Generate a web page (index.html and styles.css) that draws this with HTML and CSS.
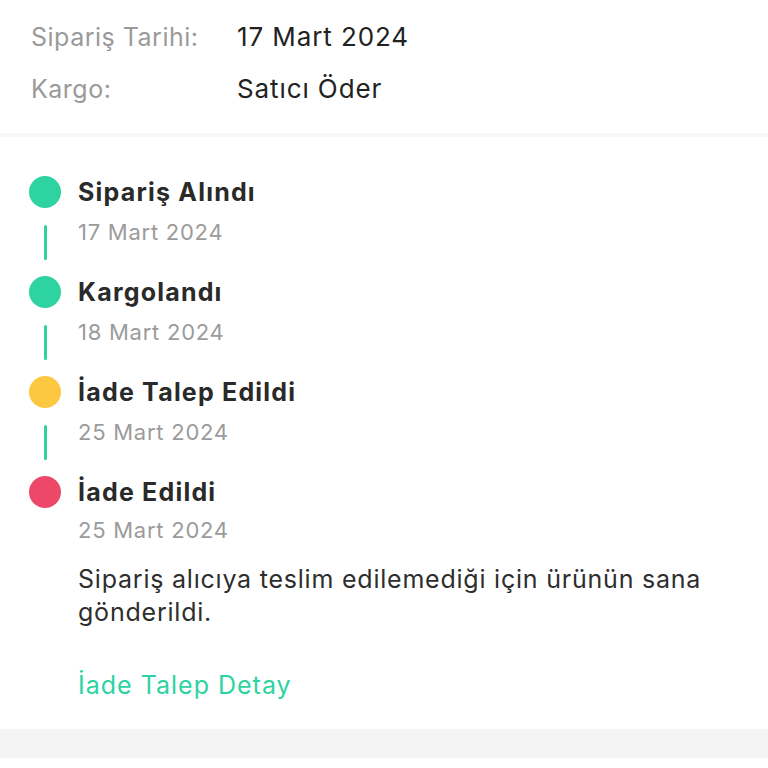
FILE: index.html
```html
<!DOCTYPE html>
<html lang="tr">
<head>
<meta charset="utf-8">
<link rel="stylesheet" href="styles.css">
</head>
<body>
<section class="info">
  <div class="info-row"><span class="label">Sipariş Tarihi:</span><span class="value">17 Mart 2024</span></div>
  <div class="info-row"><span class="label">Kargo:</span><span class="value">Satıcı Öder</span></div>
</section>
<div class="sep"></div>
<section class="timeline">
  <div class="step">
    <span class="dot green"></span>
    <span class="title">Sipariş Alındı</span>
    <span class="line-cell"><span class="line"></span></span>
    <span class="date">17 Mart 2024</span>
  </div>
  <div class="step">
    <span class="dot green"></span>
    <span class="title">Kargolandı</span>
    <span class="line-cell"><span class="line"></span></span>
    <span class="date">18 Mart 2024</span>
  </div>
  <div class="step">
    <span class="dot yellow"></span>
    <span class="title">İade Talep Edildi</span>
    <span class="line-cell"><span class="line"></span></span>
    <span class="date">25 Mart 2024</span>
  </div>
  <div class="step last">
    <span class="dot red"></span>
    <span class="title">İade Edildi</span>
    <span class="line-cell"></span>
    <div class="last-body">
      <span class="date">25 Mart 2024</span>
      <p class="desc">Sipariş alıcıya teslim edilemediği için ürünün sana gönderildi.</p>
      <a class="link" href="#">İade Talep Detay</a>
    </div>
  </div>
</section>
<div class="footer-band"></div>
</body>
</html>
```
FILE: styles.css
```css
html, body {
  margin: 0;
  padding: 0;
  background: #ffffff;
}
body {
  font-family: Inter, "Noto Sans", "Liberation Sans", sans-serif;
  color: #222222;
  width: 768px;
}
.info {
  padding: 11px 31px 18px;
}
.info-row {
  display: grid;
  grid-template-columns: 206px 1fr;
  height: 52px;
  line-height: 52px;
  font-size: 25px;
}
.label {
  color: #9a9a9a;
  letter-spacing: 0.5px;
}
.value {
  color: #222222;
  font-size: 26px;
  letter-spacing: 0.9px;
}
.sep {
  height: 4px;
  background: #f8f8f8;
}
.timeline {
  padding: 39px 0 27px 29px;
}
.step {
  display: grid;
  grid-template-columns: 32px 1fr;
  grid-template-rows: 32px 68px;
  column-gap: 17px;
}
.step.last {
  grid-template-rows: 32px auto;
}
.dot {
  width: 32px;
  height: 32px;
  border-radius: 50%;
}
.green { background: #2dd3a0; }
.yellow { background: #fdc73f; }
.red { background: #ee4868; }
.title {
  font-size: 25px;
  font-weight: 700;
  line-height: 32px;
  letter-spacing: 1.2px;
  color: #2a2a2a;
}
.line-cell {
  display: flex;
  justify-content: center;
}
.line {
  display: block;
  width: 3px;
  height: 35px;
  margin-top: 17px;
  border-radius: 2px;
  background: #2dd3a0;
}
.date {
  display: block;
  margin-top: 12px;
  font-size: 22px;
  line-height: 24px;
  letter-spacing: 0.75px;
  color: #9b9b9b;
}
.last-body {
  display: flex;
  flex-direction: column;
  align-items: flex-start;
}
.last-body .date {
  margin-top: 10px;
}
.desc {
  margin: 21px 0 0;
  font-size: 25px;
  line-height: 33px;
  letter-spacing: 0.78px;
  color: #2e2e2e;
  max-width: 640px;
}
.link {
  margin-top: 40px;
  font-size: 25px;
  line-height: 33px;
  letter-spacing: 1px;
  color: #2dd3a0;
  text-decoration: none;
}
.footer-band {
  height: 29px;
  background: #f4f4f4;
}
```
